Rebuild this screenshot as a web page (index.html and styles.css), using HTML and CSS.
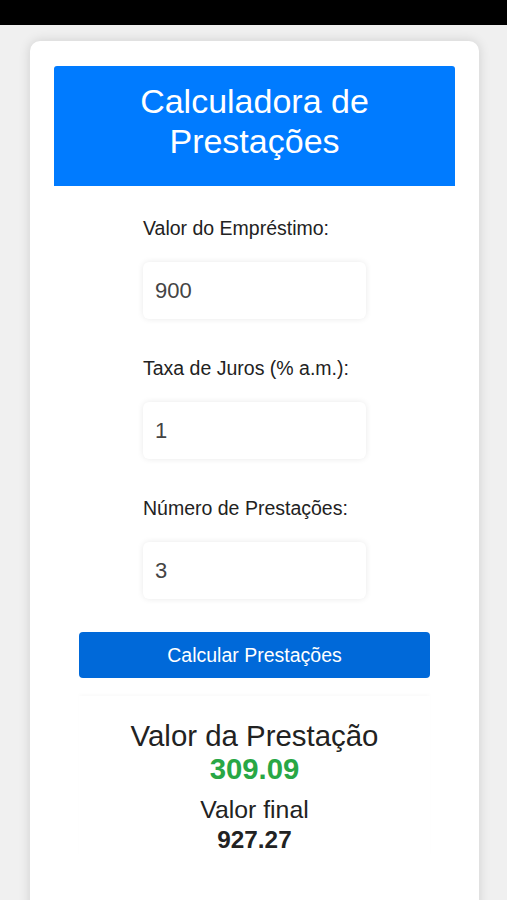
FILE: index.html
```html
<!DOCTYPE html>
<html lang="pt">
<head>
<meta charset="utf-8">
<title>Calculadora de Prestações</title>
<link rel="stylesheet" href="styles.css">
</head>
<body>
<div class="topbar"></div>
<main class="page">
  <section class="card">
    <h1 class="title">Calculadora de Prestações</h1>
    <form class="form">
      <div class="field">
        <label class="label" for="valor">Valor do Empréstimo:</label>
        <input class="input" id="valor" type="text" value="900">
      </div>
      <div class="field">
        <label class="label" for="taxa">Taxa de Juros (% a.m.):</label>
        <input class="input" id="taxa" type="text" value="1">
      </div>
      <div class="field">
        <label class="label" for="num">Número de Prestações:</label>
        <input class="input" id="num" type="text" value="3">
      </div>
    </form>
    <button class="btn" type="button">Calcular Prestações</button>
    <div class="result">
      <div class="r-label">Valor da Prestação</div>
      <div class="r-value">309.09</div>
      <div class="r-label2">Valor final</div>
      <div class="r-value2">927.27</div>
    </div>
  </section>
</main>
</body>
</html>
```
FILE: styles.css
```css
html, body {
  margin: 0;
  padding: 0;
}
body {
  background: #f0f0f0;
  font-family: "Liberation Sans", Arial, sans-serif;
  color: #222;
  height: 900px;
  overflow: hidden;
}
.topbar {
  height: 25px;
  background: #000;
}
.page {
  padding: 16px 28px 0 30px;
}
.card {
  background: #fff;
  border-radius: 10px;
  box-shadow: 0 0 12px rgba(0, 0, 0, 0.14);
  padding: 25px 24px 60px;
  height: 900px;
  box-sizing: border-box;
}
.title {
  margin: 0;
  background: #007bff;
  color: #fff;
  font-weight: normal;
  font-size: 34px;
  line-height: 40px;
  text-align: center;
  padding: 15px 40px 25px;
  border-radius: 3px 3px 0 0;
}
.form {
  width: 223px;
  margin: 0 auto;
  padding-top: 30px;
  display: flex;
  flex-direction: column;
  gap: 37px;
}
.field {
  display: flex;
  flex-direction: column;
}
.label {
  font-size: 19.5px;
  line-height: 24px;
  color: #222;
  margin-bottom: 22px;
  white-space: nowrap;
}
.input {
  height: 57px;
  box-sizing: border-box;
  border: none;
  border-radius: 6px;
  padding: 0 12px;
  font-family: "Liberation Sans", Arial, sans-serif;
  font-size: 22px;
  color: #444;
  background: #fff;
  box-shadow: 0 0 6px rgba(0, 0, 0, 0.09);
  outline: none;
}
.btn {
  display: block;
  width: 351px;
  height: 46px;
  margin: 33px auto 0;
  background: #0069d9;
  color: #fff;
  border: none;
  border-radius: 4px;
  font-family: "Liberation Sans", Arial, sans-serif;
  font-size: 19.5px;
}
.result {
  width: 351px;
  margin: 18px auto 0;
  box-shadow: 0 -2px 3px rgba(0, 0, 0, 0.02);
  text-align: center;
  padding-top: 23px;
}
.r-label {
  font-size: 29.4px;
  line-height: 34px;
  color: #222;
}
.r-value {
  font-size: 29.3px;
  line-height: 32px;
  font-weight: bold;
  color: #28a745;
}
.r-label2 {
  font-size: 24.8px;
  line-height: 28px;
  margin-top: 11px;
  color: #222;
}
.r-value2 {
  font-size: 24.3px;
  line-height: 32px;
  font-weight: bold;
  color: #222;
}
```
